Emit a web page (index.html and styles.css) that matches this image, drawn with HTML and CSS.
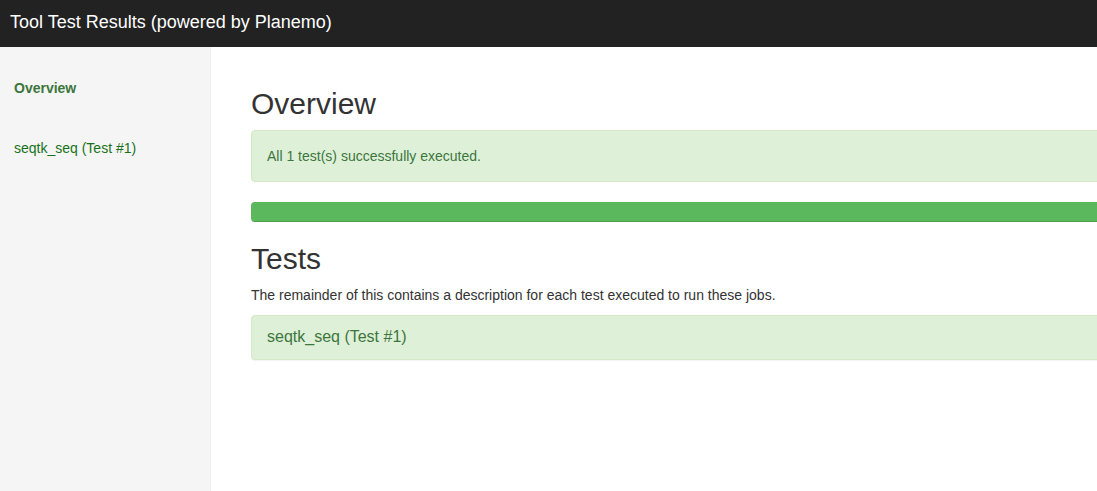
FILE: index.html
```html
<!DOCTYPE html>
<html>
<head>
<meta charset="utf-8">
<title>Tool Test Results</title>
<link rel="stylesheet" href="styles.css">
</head>
<body>
<header class="navbar">
  <span class="brand">Tool Test Results (powered by Planemo)</span>
</header>
<div class="layout">
  <nav class="sidebar">
    <a class="side-link active" href="#overview">Overview</a>
    <a class="side-link" href="#test1">seqtk_seq (Test #1)</a>
  </nav>
  <main class="main">
    <h2 class="heading" id="overview">Overview</h2>
    <div class="alert">All 1 test(s) successfully executed.</div>
    <div class="progress"><div class="progress-bar"></div></div>
    <h2 class="heading">Tests</h2>
    <p class="lead-text">The remainder of this contains a description for each test executed to run these jobs.</p>
    <div class="panel" id="test1">
      <div class="panel-heading">seqtk_seq (Test #1)</div>
    </div>
  </main>
</div>
</body>
</html>
```

FILE: styles.css
```css
html, body {
  margin: 0;
  padding: 0;
  height: 100%;
  overflow: hidden;
}
body {
  font-family: "Liberation Sans", Arial, sans-serif;
  font-size: 14px;
  line-height: 20px;
  color: #333;
  background: #fff;
  display: flex;
  flex-direction: column;
}
.navbar {
  height: 47px;
  flex: none;
  background: #222;
  display: flex;
  align-items: center;
  padding-left: 10px;
  box-sizing: border-box;
}
.brand {
  color: #fff;
  font-size: 18px;
  line-height: 20px;
  margin-top: -3px;
}
.layout {
  flex: 1;
  display: flex;
  min-height: 0;
}
.sidebar {
  width: 210px;
  flex: none;
  background: #f5f5f5;
  border-right: 1px solid #eee;
  display: flex;
  flex-direction: column;
  gap: 20px;
  padding-top: 21px;
}
.side-link {
  display: block;
  padding: 10px 14px;
  color: #177317;
  text-decoration: none;
}
.side-link.active {
  color: #3c763d;
  font-weight: bold;
}
.main {
  flex: none;
  width: 1100px;
  padding: 20px 0 0 40px;
}
.heading {
  font-size: 30px;
  font-weight: 500;
  line-height: 33px;
  margin: 20px 0 10px;
  color: #333;
}
.alert {
  background: #dff0d8;
  border: 1px solid #d6e9c6;
  border-radius: 4px;
  color: #3c763d;
  padding: 15px;
  margin-bottom: 20px;
}
.progress {
  height: 20px;
  border-radius: 4px;
  background: #f5f5f5;
  overflow: hidden;
  margin-bottom: 20px;
}
.progress-bar {
  height: 100%;
  width: 100%;
  background: #5cb85c;
  box-shadow: inset 0 -1px 0 rgba(0,0,0,0.15);
}
.lead-text {
  margin: 0 0 10px;
}
.panel {
  background: #dff0d8;
  border: 1px solid #d6e9c6;
  border-radius: 4px;
  box-shadow: 0 1px 1px rgba(0,0,0,0.05);
}
.panel-heading {
  color: #3c763d;
  font-size: 16px;
  line-height: 20px;
  padding: 11px 15px 12px;
}
```
